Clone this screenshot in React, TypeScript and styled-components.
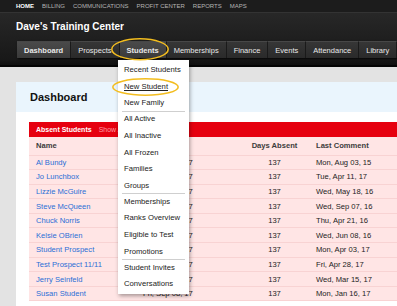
import styled, { createGlobalStyle } from "styled-components";

const GlobalStyle = createGlobalStyle`
  html, body {
    margin: 0;
    padding: 0;
    overflow: hidden;
  }
  body {
    font-family: "Liberation Sans", Arial, sans-serif;
  }
`;

const Page = styled.div`
  position: relative;
  width: 397px;
  height: 306px;
  overflow: hidden;
  background: #e3e3e3;
  display: flex;
  flex-direction: column;
`;

const Header = styled.div`
  height: 67px;
  flex-shrink: 0;
  box-sizing: border-box;
  background: linear-gradient(#2c2c2c 0px, #252525 20px, #181818 60px, #0c0c0c 67px);
  border-bottom: 2px solid #050505;
  display: flex;
  flex-direction: column;
`;

const TopNav = styled.div`
  height: 12px;
  background: #1c1c1c;
  border-bottom: 1px solid #333;
  display: flex;
  align-items: center;
  gap: 8px;
  padding-left: 16px;
`;

const TopLink = styled.span<{ $active?: boolean }>`
  font-size: 6px;
  text-transform: uppercase;
  color: ${(p) => (p.$active ? "#fff" : "#b4b4b4")};
  font-weight: ${(p) => (p.$active ? "bold" : "normal")};
`;

const Title = styled.div`
  margin: 7px 0 0 16px;
  height: 14px;
  line-height: 14px;
  font-size: 10px;
  font-weight: bold;
  color: #fff;
`;

const Tabs = styled.div`
  margin: 7px 0 0 17px;
  height: 17px;
  display: flex;
  box-shadow: 1px 1px 2px rgba(0, 0, 0, 0.8);
  align-self: flex-start;
`;

const Tab = styled.div<{ $active?: boolean; $bold?: boolean }>`
  padding: 0 7px;
  display: flex;
  align-items: center;
  font-size: 7.5px;
  color: #e8e8e8;
  font-weight: ${(p) => (p.$bold ? "bold" : "normal")};
  background: ${(p) =>
    p.$active
      ? "linear-gradient(#4a4a4a, #3a3a3a)"
      : "linear-gradient(#363636, #2a2a2a)"};
  border-right: 1px solid #1a1a1a;
  border-top: 1px solid #474747;
`;

const Content = styled.div`
  flex: 1;
  padding: 15px 0 0 16px;
`;

const Card = styled.div`
  width: 420px;
  height: 100%;
  background: #fff;
  display: flex;
  flex-direction: column;
`;

const CardHeader = styled.div`
  height: 30px;
  background: #eaf5fd;
  display: flex;
  align-items: center;
  justify-content: space-between;
  padding-left: 14px;
`;

const Heading = styled.div`
  font-size: 11px;
  font-weight: bold;
  color: #111;
`;

const HeaderLink = styled.div`
  font-size: 9.5px;
  color: #3b86d6;
  width: 37px;
  white-space: nowrap;
  overflow: hidden;
`;

const CardBody = styled.div`
  padding: 9.5px 0 0 13px;
`;

const RedBar = styled.div`
  height: 15.5px;
  background: #e6000f;
  display: flex;
  align-items: center;
  padding-left: 7px;
  gap: 7px;
  font-size: 7px;
`;

const BarTitle = styled.span`
  color: #fff;
  font-weight: bold;
`;

const BarLink = styled.span`
  color: #ff9da3;
`;

const Table = styled.div`
  background: #ffe5e5;
  display: flex;
  flex-direction: column;
`;

const Row = styled.div<{ $head?: boolean }>`
  display: grid;
  grid-template-columns: 107px 104px 69px 1fr;
  align-items: center;
  height: ${(p) => (p.$head ? "18.5px" : "14.6px")};
  box-sizing: border-box;
  border-bottom: 1px solid #f8d3d3;
  font-size: 7.6px;
  color: ${(p) => (p.$head ? "#3c3c3c" : "#222")};
  font-weight: ${(p) => (p.$head ? "bold" : "normal")};
  white-space: nowrap;
`;

const Cell = styled.div<{ $center?: boolean; $link?: boolean }>`
  padding: 0 7px;
  text-align: ${(p) => (p.$center ? "center" : "left")};
  color: ${(p) => (p.$link ? "#2a6ed6" : "inherit")};
`;

const Dropdown = styled.div`
  position: absolute;
  left: 118px;
  top: 60px;
  width: 71px;
  padding: 1.7px 0 1px;
  background: #fff;
  box-shadow: 1px 2px 4px rgba(0, 0, 0, 0.35);
  display: flex;
  flex-direction: column;
`;

const MenuItem = styled.div<{ $sep?: boolean; $underline?: boolean }>`
  height: 16.67px;
  box-sizing: border-box;
  display: flex;
  align-items: center;
  margin: 0 4px;
  padding-left: 2px;
  font-size: 7.7px;
  color: #222;
  white-space: nowrap;
  text-decoration: ${(p) => (p.$underline ? "underline" : "none")};
  border-bottom: ${(p) => (p.$sep ? "1.5px solid #cfcfcf" : "1.5px solid transparent")};
  margin-bottom: ${(p) => (p.$sep ? "-0.75px" : "0")};
`;

const Highlight = styled.svg<{ $x: number; $y: number }>`
  position: absolute;
  left: ${(p) => p.$x}px;
  top: ${(p) => p.$y}px;
  overflow: visible;
`;

const topLinks = ["Home", "Billing", "Communications", "Profit Center", "Reports", "Maps"];

const tabs = [
  { label: "Dashboard", active: true, bold: true },
  { label: "Prospects" },
  { label: "Students", active: true, bold: true },
  { label: "Memberships" },
  { label: "Finance" },
  { label: "Events" },
  { label: "Attendance" },
  { label: "Library" },
];

const menu = [
  { label: "Recent Students" },
  { label: "New Student", underline: true },
  { label: "New Family", sep: true },
  { label: "All Active" },
  { label: "All Inactive" },
  { label: "All Frozen" },
  { label: "Families" },
  { label: "Groups", sep: true },
  { label: "Memberships" },
  { label: "Ranks Overview" },
  { label: "Eligible to Test" },
  { label: "Promotions", sep: true },
  { label: "Student Invites" },
  { label: "Conversations" },
];

const students = [
  ["Al Bundy", "Mon, Aug 03, 15"],
  ["Jo Lunchbox", "Tue, Apr 11, 17"],
  ["Lizzie McGuire", "Wed, May 18, 16"],
  ["Steve McQueen", "Wed, Sep 07, 16"],
  ["Chuck Norris", "Thu, Apr 21, 16"],
  ["Kelsie OBrien", "Wed, Jun 08, 16"],
  ["Student Prospect", "Mon, Apr 03, 17"],
  ["Test Prospect 11/11", "Fri, Apr 28, 17"],
  ["Jerry Seinfeld", "Wed, Mar 15, 17"],
  ["Susan Student", "Mon, Jan 16, 17"],
];

const Ring = ({ x, y, w, h }: { x: number; y: number; w: number; h: number }) => (
  <Highlight $x={x} $y={y} width={w} height={h} viewBox={`0 0 ${w} ${h}`}>
    <ellipse
      cx={w / 2}
      cy={h / 2}
      rx={w / 2 - 0.8}
      ry={h / 2 - 0.8}
      fill="none"
      stroke="#f3bd1f"
      strokeWidth={1.5}
    />
  </Highlight>
);

export default function App() {
  return (
    <Page>
      <GlobalStyle />
      <Header>
        <TopNav>
          {topLinks.map((l, i) => (
            <TopLink key={l} $active={i === 0}>
              {l}
            </TopLink>
          ))}
        </TopNav>
        <Title>Dave's Training Center</Title>
        <Tabs>
          {tabs.map((t) => (
            <Tab key={t.label} $active={t.active} $bold={t.bold}>
              {t.label}
            </Tab>
          ))}
        </Tabs>
      </Header>
      <Content>
        <Card>
          <CardHeader>
            <Heading>Dashboard</Heading>
            <HeaderLink>Dashboard Settings</HeaderLink>
          </CardHeader>
          <CardBody>
            <RedBar>
              <BarTitle>Absent Students</BarTitle>
              <BarLink>Show All</BarLink>
            </RedBar>
            <Table>
              <Row $head>
                <Cell>Name</Cell>
                <Cell>Last In</Cell>
                <Cell $center>Days Absent</Cell>
                <Cell>Last Comment</Cell>
              </Row>
              {students.map(([name, comment]) => (
                <Row key={name}>
                  <Cell $link>{name}</Cell>
                  <Cell>Fri, Sep 08, 17</Cell>
                  <Cell $center>137</Cell>
                  <Cell>{comment}</Cell>
                </Row>
              ))}
            </Table>
          </CardBody>
        </Card>
      </Content>
      <Dropdown>
        {menu.map((m) => (
          <MenuItem key={m.label} $sep={m.sep} $underline={m.underline}>
            {m.label}
          </MenuItem>
        ))}
      </Dropdown>
      <Ring x={111} y={37.5} w={58} h={22.5} />
      <Ring x={112} y={77.5} w={67} h={18} />
    </Page>
  );
}
